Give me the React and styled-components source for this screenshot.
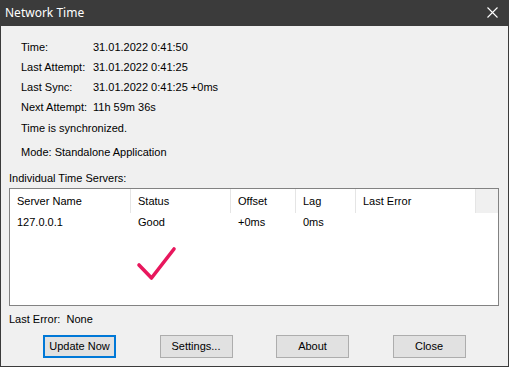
import React from "react";
import styled, { createGlobalStyle } from "styled-components";

const Global = createGlobalStyle`
  html, body { margin: 0; padding: 0; background: #f0f0f0; }
  * { box-sizing: border-box; }
`;

const Window = styled.div`
  width: 509px;
  height: 367px;
  border: 1px solid #3b3b3b;
  border-top: none;
  background: #f0f0f0;
  display: flex;
  flex-direction: column;
  font-family: "Liberation Sans", Arial, sans-serif;
  font-size: 11px;
  color: #000;
`;

const TitleBar = styled.div`
  height: 26px;
  flex: none;
  background: #3b3b3b;
  margin: 0 -1px;
  display: flex;
  align-items: center;
  justify-content: space-between;
  padding: 0 0 1px 5px;
  color: #fff;
  font-family: "Noto Sans", "Open Sans", sans-serif;
  font-size: 12px;
`;

const CloseBtn = styled.div`
  width: 46px;
  height: 26px;
  display: flex;
  align-items: center;
  justify-content: center;
  margin-right: -6px;
`;

const Body = styled.div`
  flex: 1;
  display: flex;
  flex-direction: column;
  padding: 11px 9px 0 8px;
`;

const Info = styled.div`
  display: flex;
  flex-direction: column;
  padding-left: 12px;
`;

const InfoRow = styled.div`
  display: flex;
  height: 20px;
  align-items: center;
`;

const Label = styled.span`
  width: 72px;
  flex: none;
`;

const Note = styled.div`
  height: ${(p) => p.$h}px;
  display: flex;
  align-items: center;
`;

const SectionLabel = styled.div`
  height: 20px;
  display: flex;
  align-items: center;
  margin-top: 3px;
`;

const ListBox = styled.div`
  position: relative;
  height: 118px;
  background: #fff;
  border: 1px solid #828282;
  display: flex;
  flex-direction: column;
`;

const HeaderRow = styled.div`
  display: flex;
  height: 24px;
  flex: none;
`;

const HeadCell = styled.div`
  width: ${(p) => p.$w}px;
  flex: none;
  padding-left: 7px;
  display: flex;
  align-items: center;
  padding-bottom: 1px;
  border-left: ${(p) => (p.$first ? "none" : "1px solid #e5e5e5")};
`;

const HeadFiller = styled.div`
  flex: 1;
  background: #f0f0f0;
  border-left: 1px solid #e5e5e5;
`;

const DataRow = styled.div`
  display: flex;
  height: 18px;
  align-items: center;
`;

const Cell = styled.div`
  width: ${(p) => p.$w}px;
  flex: none;
  padding-left: ${(p) => (p.$first ? 7 : 8)}px;
`;

const Check = styled.svg`
  position: absolute;
  left: 126px;
  top: 57px;
`;

const Footer = styled.div`
  height: 24px;
  display: flex;
  align-items: center;
  padding-top: 1px;
`;

const Buttons = styled.div`
  display: flex;
  gap: 43.5px;
  padding-left: 34px;
  margin-top: 5px;
`;

const Button = styled.div`
  width: 73px;
  height: 23px;
  background: #e1e1e1;
  border: ${(p) => (p.$default ? "2px solid #0078d7" : "1px solid #adadad")};
  display: flex;
  align-items: center;
  justify-content: center;
  padding-bottom: 1px;
`;

const columns = [
  { name: "Server Name", w: 120 },
  { name: "Status", w: 100 },
  { name: "Offset", w: 65 },
  { name: "Lag", w: 60 },
  { name: "Last Error", w: 120 },
];

const info = [
  ["Time:", "31.01.2022 0:41:50"],
  ["Last Attempt:", "31.01.2022 0:41:25"],
  ["Last Sync:", "31.01.2022 0:41:25 +0ms"],
  ["Next Attempt:", "11h 59m 36s"],
];

const row = ["127.0.0.1", "Good", "+0ms", "0ms", ""];

export default function App() {
  return (
    <>
      <Global />
      <Window>
        <TitleBar>
          <span>Network Time</span>
          <CloseBtn>
            <svg width="11" height="11" viewBox="0 0 11 11">
              <path d="M0.5 0.5 L10.5 10.5 M10.5 0.5 L0.5 10.5" stroke="#fff" strokeWidth="1.1" />
            </svg>
          </CloseBtn>
        </TitleBar>
        <Body>
          <Info>
            {info.map(([l, v]) => (
              <InfoRow key={l}>
                <Label>{l}</Label>
                <span>{v}</span>
              </InfoRow>
            ))}
            <Note $h={22}>Time is synchronized.</Note>
            <Note $h={26}>Mode: Standalone Application</Note>
          </Info>
          <SectionLabel>Individual Time Servers:</SectionLabel>
          <ListBox>
            <HeaderRow>
              {columns.map((c, i) => (
                <HeadCell key={c.name} $w={c.w} $first={i === 0}>
                  {c.name}
                </HeadCell>
              ))}
              <HeadFiller />
            </HeaderRow>
            <DataRow>
              {row.map((v, i) => (
                <Cell key={i} $w={columns[i].w} $first={i === 0}>
                  {v}
                </Cell>
              ))}
            </DataRow>
            <Check width="44" height="40" viewBox="0 0 44 40">
              <path
                d="M3 19 L15.5 32 L38 3"
                fill="none"
                stroke="#e8175d"
                strokeWidth="3.6"
                strokeLinecap="round"
                strokeLinejoin="round"
              />
            </Check>
          </ListBox>
          <Footer>Last Error:&nbsp; None</Footer>
          <Buttons>
            <Button $default>Update Now</Button>
            <Button>Settings...</Button>
            <Button>About</Button>
            <Button>Close</Button>
          </Buttons>
        </Body>
      </Window>
    </>
  );
}
